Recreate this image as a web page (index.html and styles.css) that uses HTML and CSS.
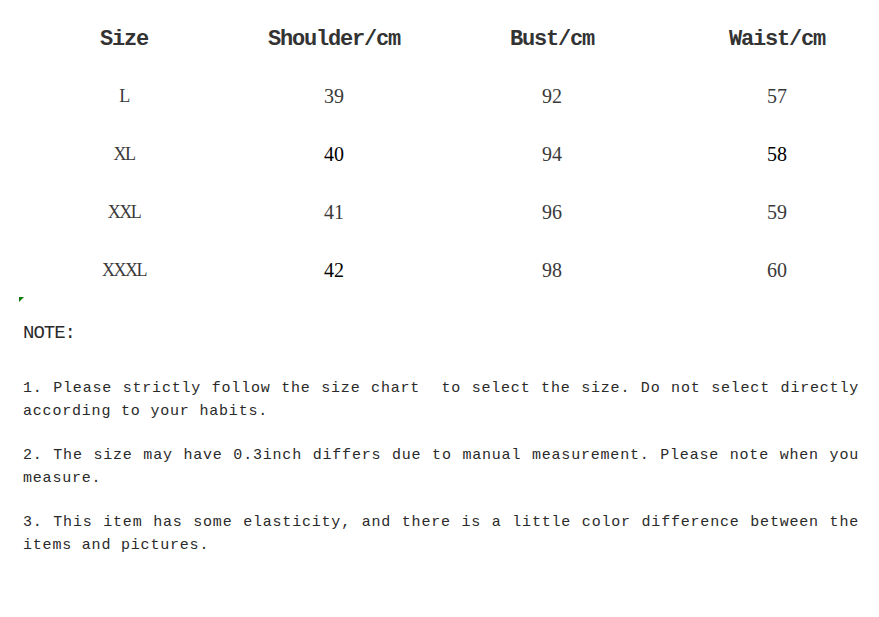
FILE: index.html
```html
<!DOCTYPE html>
<html lang="en">
<head>
<meta charset="utf-8">
<title>Size chart</title>
<link rel="stylesheet" href="styles.css">
</head>
<body>
<div class="chart">
  <div class="cell head">Size</div>
  <div class="cell head">Shoulder/cm</div>
  <div class="cell head">Bust/cm</div>
  <div class="cell head">Waist/cm</div>

  <div class="cell size">L</div>
  <div class="cell num">39</div>
  <div class="cell num">92</div>
  <div class="cell num">57</div>

  <div class="cell size">XL</div>
  <div class="cell num dark">40</div>
  <div class="cell num">94</div>
  <div class="cell num dark">58</div>

  <div class="cell size">XXL</div>
  <div class="cell num">41</div>
  <div class="cell num">96</div>
  <div class="cell num">59</div>

  <div class="cell size">XXXL</div>
  <div class="cell num dark">42</div>
  <div class="cell num">98</div>
  <div class="cell num">60</div>
</div>

<div class="notes">
  <div class="marker"></div>
  <div class="note-title">NOTE:</div>
  <p class="note">1. Please strictly follow the size chart&nbsp; to select the size. Do not select directly according to your habits.</p>
  <p class="note">2. The size may have 0.3inch differs due to manual measurement. Please note when you measure.</p>
  <p class="note">3. This item has some elasticity, and there is a little color difference between the items and pictures.</p>
</div>
</body>
</html>
```

FILE: styles.css
```css
html, body {
  margin: 0;
  padding: 0;
  background: #ffffff;
}

body {
  color: #333333;
  font-family: "Liberation Mono", "DejaVu Sans Mono", monospace;
}

.chart {
  display: grid;
  grid-template-columns: 248px 172px 264px 186px;
  grid-auto-rows: 58px;
  padding-top: 9px;
  width: 870px;
}

.cell {
  display: flex;
  align-items: center;
  justify-content: center;
  white-space: nowrap;
}

.head {
  font-family: "Liberation Mono", monospace;
  font-weight: bold;
  font-size: 22px;
  letter-spacing: -1.2px;
  padding-top: 2px;
  color: #333333;
}

.size {
  font-family: "Liberation Serif", serif;
  font-size: 18px;
  letter-spacing: -1.5px;
  color: #3a3a3a;
}

.num {
  font-family: "Liberation Serif", serif;
  font-size: 20px;
  color: #3a3a3a;
}

.num.dark {
  color: #000000;
}

.notes {
  padding: 0 20px 0 23px;
}

.marker {
  width: 0;
  height: 0;
  margin-left: -4px;
  margin-top: -2px;
  border-top: 5px solid #0b7a0b;
  border-right: 5px solid transparent;
}

.note-title {
  margin-top: 20px;
  font-size: 19px;
  letter-spacing: -1px;
  line-height: 23px;
  color: #2a2a2a;
}

.note {
  margin: 21px 0 0;
  font-size: 15px;
  line-height: 23px;
  letter-spacing: 0.8px;
  text-align: justify;
  color: #2a2a2a;
}

.note-title + .note {
  margin-top: 32px;
}
```
